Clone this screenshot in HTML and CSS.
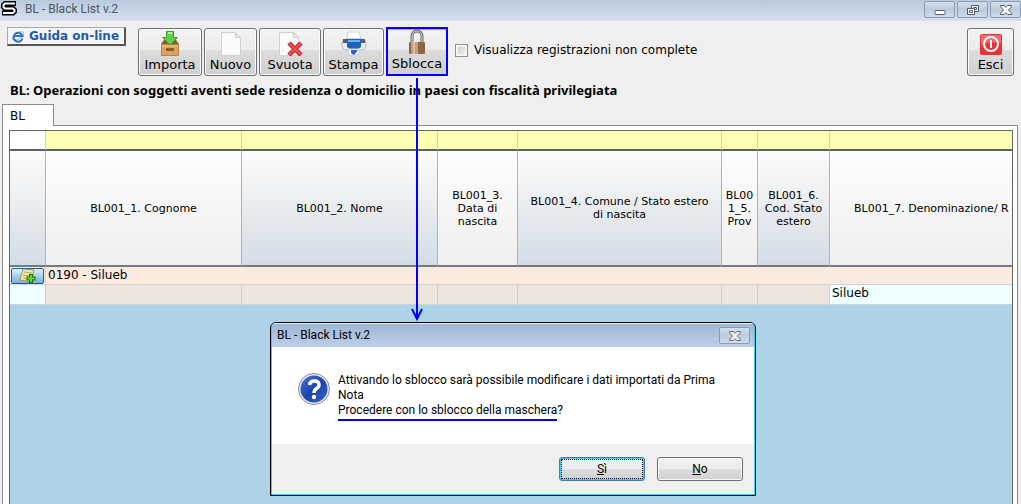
FILE: index.html
```html
<!DOCTYPE html>
<html lang="it">
<head>
  <meta charset="UTF-8">
  <meta name="viewport" content="width=device-width, initial-scale=1.0">
  <title>BL - Black List v.2</title>
  <link rel="stylesheet" href="styles.css">
</head>
<body>
  <div class="window">
    <header class="titlebar">
      <svg class="logo" viewBox="0 0 18 16" width="18" height="16">
        <path d="M16 3.500H5L3.500 5V7L5 8.500H13L14.500 10V11.500L13 13H2" fill="none" stroke="#000" stroke-width="5"/>
        <path d="M15 3.500H5L3.500 5V7L5 8.500H13L14.500 10V11.500L13 13H3" fill="none" stroke="#fff" stroke-width="2"/>
      </svg>
      <span class="title">BL - Black List v.2</span>
      <div class="window-buttons">
        <button class="win-btn" aria-label="Riduci">
          <svg viewBox="0 0 14 12" width="14" height="12"><rect x="2" y="6.500" width="10" height="4" rx="1" fill="#fff" stroke="#555b66"/></svg>
        </button>
        <button class="win-btn" aria-label="Ripristina">
          <svg viewBox="0 0 14 12" width="14" height="12" fill="#fff" stroke="#555b66"><path d="M5.500 1.500h7v6h-7z"/><path d="M7.500 3.500h3v2h-3z"/><path d="M1.500 4.500h7v6h-7z"/><path d="M3.500 6.500h3v2h-3z"/></svg>
        </button>
        <button class="win-btn" aria-label="Chiudi">
          <svg viewBox="0 0 14 12" width="14" height="12"><path d="M1.500 1.500h3.700L7 3.300 8.800 1.500h3.700v1.300L9.500 6l3 3.200v1.300H8.800L7 8.700 5.200 10.500H1.500V9.200l3-3.200-3-3.200z" fill="#fff" stroke="#555b66"/></svg>
        </button>
      </div>
    </header>

    <div class="toolbar">
      <a class="guide" href="#">
        <svg viewBox="0 0 14 14" width="14" height="14"><ellipse cx="7" cy="7" rx="6.500" ry="3" fill="none" stroke="#8fb7df" transform="rotate(-30 7 7)"/><path d="M11.500 9.500A4.500 4.500 0 1 1 11.500 7H4" fill="none" stroke="#2f74c4" stroke-width="2"/></svg>
        Guida on-line
      </a>
      <div class="tools">
        <button class="tool import">
          <svg viewBox="0 0 26 26" width="26" height="26">
            <path d="M4 14l3-4h12l3 4z" fill="#8b5a2b"/><path d="M4.500 14.500h17v11h-17z" fill="#dca35c" stroke="#bb8140"/><path d="M5 16h16" stroke="#f0c88c"/><rect x="9" y="18" width="8" height="3" fill="#8b5a2b"/>
            <path d="M9.500 1.500h7v6h4L13 15 5.500 7.500h4z" fill="#62cf4a" stroke="#3a9e2a"/>
            <path d="M11 3h4" stroke="#b8f0a8" stroke-width="2"/>
          </svg>
          Importa
        </button>
        <button class="tool new">
          <svg viewBox="0 0 26 26" width="26" height="26"><path d="M3.500 2.500h14l5 5v18h-19z" fill="#fafafa" stroke="#d2d2d2"/><path d="M17.500 2.500v5h5z" fill="#e8e8e8" stroke="#cfcfcf"/></svg>
          Nuovo
        </button>
        <button class="tool empty">
          <svg viewBox="0 0 26 26" width="26" height="26"><path d="M2.500 2.500h14l5 5v18h-19z" fill="#fafafa" stroke="#d2d2d2"/><path d="M16.500 2.500v5h5z" fill="#e8e8e8" stroke="#cfcfcf"/><path d="M12 13l12 12M24 13L12 25" stroke="#b81d24" stroke-width="4.500"/><path d="M12 13l12 12M24 13L12 25" stroke="#ef4b50" stroke-width="2.500"/></svg>
          Svuota
        </button>
        <button class="tool print">
          <svg viewBox="0 0 26 26" width="26" height="26"><path d="M7 2h11l2 7H6z" fill="#fff" stroke="#cdd3da"/><rect x="1" y="9" width="24" height="11" rx="4" fill="#e8edf2" stroke="#b4bcc6"/><path d="M2 9h4v4H2zM20 9h4v4h-4z" fill="#555e68"/><path d="M6 9h14v8l-3 2H9l-3-2z" fill="#1f62bd"/><path d="M7 11h12" stroke="#72b2f2" stroke-width="2"/><path d="M7 19h12l-2 6H8z" fill="#f6f9fc" stroke="#c8d0d8"/><path d="M10 20h7l-4 5-3-2z" fill="#2566c2"/></svg>
          Stampa
        </button>
        <div class="tool-wrap">
          <button class="tool unlock">
            <svg viewBox="0 0 26 26" width="26" height="26"><path d="M8 14V7a5 5 0 0 1 10 0v7" fill="none" stroke="#666" stroke-width="3"/><path d="M8 14V7a5 5 0 0 1 10 0v7" fill="none" stroke="#ddd"/><rect x="5" y="13" width="16" height="12" rx="1" fill="#94674a"/><path d="M7 13h7v12H7z" fill="#c9a285"/><path d="M9 13h2v12H9z" fill="#e2c8b2"/><path d="M5 16h16M5 19h16M5 22h16" stroke="#805338" opacity=".2"/></svg>
            Sblocca
          </button>
          <svg class="arrow" viewBox="0 0 14 243" width="14" height="243"><path d="M7 0v240M2 231l5 10 5-10" fill="none" stroke="#00f" stroke-width="2"/></svg>
        </div>
      </div>
      <label class="check"><input type="checkbox"> Visualizza registrazioni non complete</label>
      <button class="tool exit">
        <svg viewBox="0 0 26 26" width="26" height="26"><rect x="2" y="4" width="22" height="21" rx="2" fill="#e83236"/><path d="M3 5h20v8Q13 11 3 15z" fill="#f4686a"/><circle cx="13" cy="14" r="7" fill="none" stroke="#fff" stroke-width="2"/><path d="M13 10v8" stroke="#fff" stroke-width="2"/></svg>
        Esci
      </button>
    </div>

    <h1>BL: Operazioni con soggetti aventi sede residenza o domicilio in paesi con fiscalità privilegiata</h1>

    <div class="tabs"><button class="tab">BL</button></div>
    <main class="panel">
      <div class="grid">
        <table>
          <colgroup>
            <col class="w-icon"><col class="w-name"><col class="w-name"><col class="w-date"><col class="w-town"><col class="w-prov"><col class="w-code"><col>
          </colgroup>
          <thead>
            <tr class="filter"><td></td><td></td><td></td><td></td><td></td><td></td><td></td><td></td></tr>
            <tr class="heads">
              <th></th>
              <th>BL001_1. Cognome</th>
              <th>BL001_2. Nome</th>
              <th>BL001_3. Data di nascita</th>
              <th class="town">BL001_4. Comune / Stato estero di nascita</th>
              <th>BL00<wbr>1_5. Prov</th>
              <th>BL001_6. Cod. Stato estero</th>
              <th class="wide">BL001_7. Denominazione/ R</th>
            </tr>
          </thead>
          <tbody>
            <tr class="group">
              <td><button class="note" aria-label="Aggiungi nota">
                <svg viewBox="0 0 20 16" width="20" height="16"><path d="M5 1l11 1-3 12-11-2z" fill="#f6e8a4" stroke="#a8924a"/><path d="M6 4l8 1M5 7l8 1M5 10l6 1" stroke="#b8a468"/><path d="M13 6v9M8.500 10.500h9" stroke="#1a6e14" stroke-width="4"/><path d="M13 7v7M9.500 10.500h7" stroke="#5ddc38" stroke-width="2"/></svg>
              </button></td>
              <td colspan="7">0190 - Silueb</td>
            </tr>
            <tr class="data"><td></td><td></td><td></td><td></td><td></td><td></td><td></td><td>Silueb</td></tr>
          </tbody>
        </table>
      </div>
    </main>

    <section class="dialog" role="dialog" aria-labelledby="dialog-title">
      <div class="dialog-bar">
        <span id="dialog-title">BL - Black List v.2</span>
        <button class="win-btn" aria-label="Chiudi finestra">
          <svg viewBox="0 0 14 12" width="14" height="12"><path d="M1.500 1.500h3.700L7 3.300 8.800 1.500h3.700v1.300L9.500 6l3 3.200v1.300H8.800L7 8.700 5.200 10.500H1.500V9.200l3-3.200-3-3.200z" fill="#eee" stroke="#666c76"/></svg>
        </button>
      </div>
      <div class="dialog-body">
        <svg viewBox="0 0 32 32" width="32" height="32">
          <defs><linearGradient id="blue" x2="1" y2="1"><stop offset="0" stop-color="#4a78dc"/><stop offset=".5" stop-color="#1c42ac"/><stop offset="1" stop-color="#3567d0"/></linearGradient></defs>
          <circle cx="16" cy="16" r="15.500" fill="#e8e8e8" stroke="#8c8c8c"/><circle cx="16" cy="16" r="13.500" fill="url(#blue)"/>
          <path d="M11.500 12Q12 8 16.500 8T21 12Q21 14 18.500 15.500T16 20" fill="none" stroke="#fff" stroke-width="3.500"/><circle cx="16" cy="24" r="2.200" fill="#fff"/>
        </svg>
        <p>Attivando lo sblocco sarà possibile modificare i dati importati da Prima Nota<br><span class="marked">Procedere con lo sblocco della maschera</span>?</p>
      </div>
      <div class="dialog-foot">
        <button class="answer default"><u>S</u>ì</button>
        <button class="answer"><u>N</u>o</button>
      </div>
    </section>
  </div>
</body>
</html>
```

FILE: styles.css
```css
* {
  box-sizing: border-box;
}
body {
  margin: 0;
  background: #efefef;
  color: #000;
  font-family: "DejaVu Sans", sans-serif;
  font-size: 12px;
}
button {
  padding: 0;
  color: #000;
  font-family: inherit;
}
svg {
  display: block;
  flex-shrink: 0;
}
.window {
  position: relative;
  display: flex;
  flex-direction: column;
  min-height: 100vh;
  overflow: hidden;
}
.titlebar {
  display: flex;
  align-items: flex-start;
  height: 21px;
  background: linear-gradient(#b9c9dc, #d5e1ee);
  color: #4c5765;
  font-family: Roboto, sans-serif;
}
.title {
  flex: 1;
  margin-left: 7px;
  font-size: 12px;
  line-height: 19px;
}
.window-buttons {
  display: flex;
  gap: 2px;
}
.win-btn {
  display: flex;
  align-items: center;
  justify-content: center;
  width: 31px;
  height: 17px;
  margin-top: 1px;
  border: 1px solid #8b9bb0;
  border-radius: 2px;
  background: linear-gradient(#d3dfec, #bccbdd 50%, #cddbea);
}
.toolbar {
  display: flex;
  align-items: flex-start;
  padding: 6px 7px 5px;
}
.guide {
  display: flex;
  align-items: center;
  gap: 4px;
  width: 119px;
  height: 19px;
  padding-left: 3px;
  border: 1px solid #aaa;
  border-right: 2px solid #555;
  border-bottom: 2px solid #555;
  background: #f5f5f5;
  color: #1e5bac;
  font-size: 12px;
  font-weight: bold;
  text-decoration: none;
  white-space: nowrap;
}
.tools {
  display: flex;
  gap: 2px;
  margin-left: 12px;
}
.tool {
  display: flex;
  flex-direction: column;
  align-items: center;
  width: 62px;
  height: 48px;
  margin-top: 1px;
  padding-top: 1px;
  border: 1px solid #707070;
  border-radius: 3px;
  background: linear-gradient(#f3f3f3, #ebebeb 46%, #dcdcdc 47%, #cfcfcf);
  box-shadow: inset 0 0 0 1px #fafafa;
  font-size: 13px;
  line-height: 17px;
}
.import {
  width: 64px;
}
.new {
  width: 53px;
}
.print {
  width: 61px;
}
.tool-wrap {
  position: relative;
}
.unlock {
  height: 49px;
  margin-top: 0;
  padding-top: 0;
  border: 2px solid #00f;
  border-radius: 0;
  box-shadow: inset 0 1px #4cc8f4;
}
.arrow {
  position: absolute;
  top: 51px;
  left: 24px;
  z-index: 2;
}
.check {
  display: flex;
  align-items: center;
  gap: 6px;
  margin: 16px 0 0 7px;
  white-space: nowrap;
}
.check input {
  appearance: none;
  width: 13px;
  height: 13px;
  margin: 0;
  border: 1px solid #8e8f8f;
  background: linear-gradient(135deg, #c4c8cc, #f6f6f6);
  box-shadow: inset 0 0 0 2px #f4f4f4;
}
.exit {
  width: 47px;
  margin-left: auto;
}
h1 {
  margin: 0;
  padding-left: 10px;
  font-family: "Noto Sans", sans-serif;
  font-size: 13px;
  line-height: 18px;
  white-space: nowrap;
}
.tabs {
  padding: 5px 2px 0;
}
.tab {
  position: relative;
  display: block;
  width: 52px;
  height: 22px;
  margin-bottom: -1px;
  padding-left: 7px;
  border: 1px solid #8c8c8c;
  border-bottom: 0;
  background: #fff;
  font-size: 12px;
  text-align: left;
}
.panel {
  display: flex;
  flex: 1;
  margin: 0 3px 0 2px;
  padding: 4px 4px 0 6px;
  border: 1px solid #8c8c8c;
  border-bottom: 0;
  background: #fff;
}
.grid {
  flex: 1;
  min-width: 0;
  overflow: hidden;
  border: 1px solid #646464;
  border-bottom: 0;
  background: #aed3e9;
}
table {
  width: 100%;
  table-layout: fixed;
  border-collapse: separate;
  border-spacing: 0;
}
.w-icon, .w-prov {
  width: 36px;
}
.w-name {
  width: 196px;
}
.w-date {
  width: 80px;
}
.w-town {
  width: 204px;
}
.w-code {
  width: 72px;
}
td, th {
  padding: 0;
  border-right: 1px solid #c9cfd6;
}
td:last-child, th:last-child {
  border-right: 0;
}
.filter td {
  height: 20px;
  border-bottom: 2px solid #5f5f5f;
  background: #fdffb0;
}
.filter td:first-child {
  background: #fff;
}
th {
  height: 116px;
  border-right-color: #a2b4c8;
  border-bottom: 2px solid #777b80;
  background: linear-gradient(#fdfdfd, #efefef);
  font-size: 11px;
  font-weight: normal;
  line-height: 13px;
}
th:nth-child(odd) {
  background: linear-gradient(#fcfcfc, #e9ecef 50%, #d3dce6);
}
th:nth-child(4), th:nth-child(6), th.wide {
  background: linear-gradient(#fdfdfd, #efefef);
}
th.town {
  padding: 0 8px;
}
th.wide {
  padding-left: 24px;
  overflow: hidden;
  text-align: left;
  white-space: nowrap;
}
.group td {
  height: 18px;
  border-bottom: 1px solid #cfd2d6;
  background: #faebe0;
  line-height: 17px;
}
.group td + td, .data td:last-child {
  padding-left: 2px;
}
.note {
  display: flex;
  align-items: center;
  justify-content: center;
  width: 33px;
  height: 16px;
  margin-left: 1px;
  border: 1px solid #2c5a88;
  border-radius: 2px;
  background: linear-gradient(#e2f1fb, #a6cfec 50%, #78b2de);
}
.data td {
  height: 20px;
  border-bottom: 1px solid #cfd2d6;
  background: #ede5dc;
  line-height: 17px;
  vertical-align: top;
}
.data td:first-child, .data td:last-child {
  background: #edfffe;
}
.dialog {
  position: absolute;
  top: 322px;
  left: 270px;
  width: 486px;
  border: 1px solid #000;
  border-radius: 6px 6px 0 0;
  background: #efefef;
  box-shadow: inset 0 0 0 1px #35d0ea;
  font-family: Roboto, sans-serif;
  overflow: hidden;
}
.dialog-bar {
  display: flex;
  align-items: center;
  justify-content: space-between;
  height: 24px;
  margin: 0 1px;
  padding: 0 4px 0 5px;
  background: linear-gradient(#9fb5d0, #bad0ea);
  box-shadow: inset 0 1px #e4edf6;
}
.dialog-body {
  display: flex;
  gap: 8px;
  height: 97px;
  margin: 0 1px;
  padding: 26px 32px 0 26px;
  background: #fff;
}
.dialog-body p {
  margin: 0;
  line-height: 15px;
}
.marked {
  padding-bottom: 2px;
  border-bottom: 2px solid #00f;
}
.dialog-foot {
  display: flex;
  justify-content: flex-end;
  gap: 12px;
  margin: 0 1px 1px;
  padding: 13px 11px;
}
.answer {
  width: 86px;
  height: 24px;
  border: 1px solid #707070;
  border-radius: 3px;
  background: linear-gradient(#f2f2f2, #ebebeb 50%, #dddddd 51%, #cfcfcf);
  box-shadow: inset 0 0 0 1px #fafafa;
  font-size: 12px;
}
.default {
  border-color: #3c7fb1;
  outline: 1px dotted #000;
  outline-offset: -3px;
  box-shadow: inset 0 0 0 1px #46c8f2;
}
```
